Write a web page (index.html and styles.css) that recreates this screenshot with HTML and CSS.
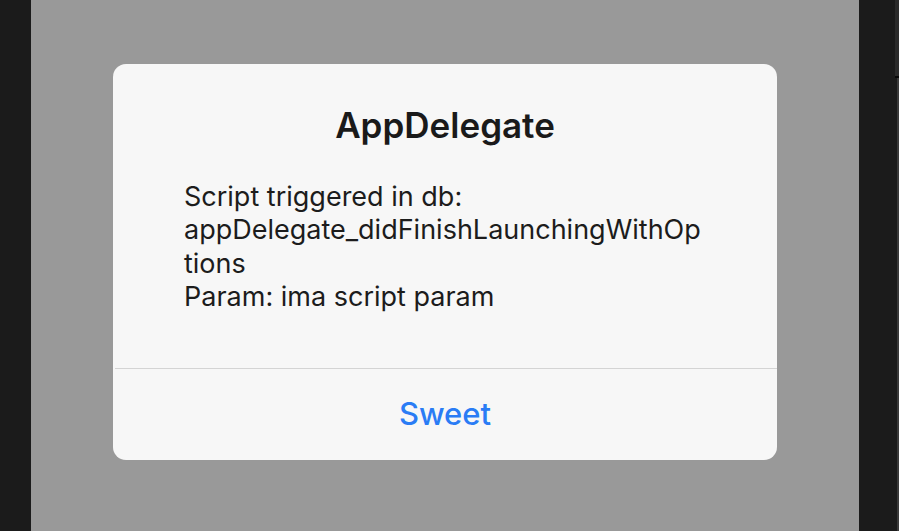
FILE: index.html
```html
<!DOCTYPE html>
<html>
<head>
<meta charset="utf-8">
<link rel="stylesheet" href="styles.css">
</head>
<body>
<div class="frame">
  <div class="side-left"></div>
  <main class="stage">
    <div class="alert">
      <h1 class="alert-title">AppDelegate</h1>
      <div class="alert-body">
        <p class="alert-message">Script triggered in db: appDelegate_didFinishLaunchingWithOptions<br>Param: ima script param</p>
      </div>
      <div class="alert-actions">
        <button class="alert-button">Sweet</button>
      </div>
    </div>
  </main>
  <div class="side-right">
    <div class="side-fill"></div>
    <div class="side-rail">
      <div class="rail-top"></div>
      <div class="rail-mark"></div>
      <div class="rail-line"></div>
    </div>
  </div>
</div>
</body>
</html>
```
FILE: styles.css
```css
html, body {
  margin: 0;
  padding: 0;
  width: 899px;
  height: 531px;
  overflow: hidden;
  background: #1b1b1b;
}
.frame {
  display: flex;
  width: 899px;
  height: 531px;
}
.side-left {
  width: 31px;
  background: #1b1b1b;
}
.stage {
  flex: 1;
  background: #999999;
  display: flex;
  justify-content: center;
  align-items: flex-start;
  padding-top: 64px;
  box-sizing: border-box;
}
.alert {
  width: 664px;
  height: 396px;
  background: #f7f7f7;
  border-radius: 13px;
  display: flex;
  flex-direction: column;
  font-family: Inter, "Noto Sans", sans-serif;
  overflow: hidden;
}
.alert-title {
  margin: 0;
  padding-top: 39px;
  text-align: center;
  font-size: 35px;
  line-height: 44px;
  font-weight: 600;
  color: #1a1a1a;
}
.alert-body {
  flex: 1;
  padding: 33px 71px 0 71px;
}
.alert-message {
  margin: 0;
  font-size: 27px;
  line-height: 33.4px;
  color: #1c1c1c;
  overflow-wrap: anywhere;
}
.alert-actions {
  height: 92px;
  flex-shrink: 0;
  box-sizing: border-box;
  padding-bottom: 3px;
  border-top: 1px solid #d4d4d4;
  margin-left: 2px;
  display: flex;
  align-items: center;
  justify-content: center;
}
.alert-button {
  border: 0;
  background: none;
  padding: 0;
  margin-left: -2px;
  font-family: Inter, "Noto Sans", sans-serif;
  font-size: 31px;
  font-weight: 500;
  color: #2a7cf5;
}
.side-right {
  width: 40px;
  display: flex;
  background: #1b1b1b;
}
.side-fill {
  flex: 1;
}
.side-rail {
  width: 4px;
  display: flex;
  flex-direction: column;
}
.rail-top {
  height: 76px;
  background: #2b2b2b;
}
.rail-mark {
  height: 2px;
  background: #080808;
}
.rail-line {
  flex: 1;
  margin-left: 2px;
  background: #3a3a3a;
}
```
